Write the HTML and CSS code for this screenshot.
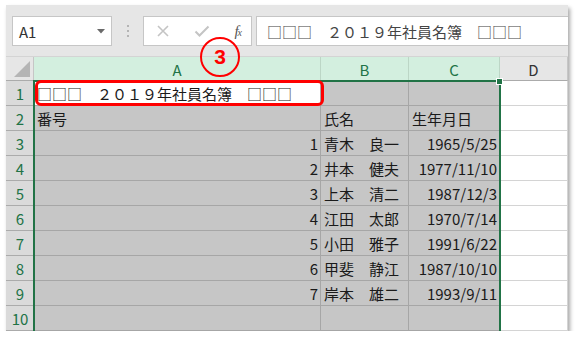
FILE: index.html
```html
<!DOCTYPE html>
<html lang="ja">
<head>
<meta charset="UTF-8" />
<title>社員名簿</title>
<link rel="stylesheet" href="styles.css">
</head>
<body>
  <div class="window">

    <div class="toolbar">
      <div class="namebox">
        <span>A1</span>
        <svg class="drop" width="8" height="5" viewBox="0 0 8 5"><path d="M0 0h8L4 4.5z" fill="#6a6a6a"/></svg>
      </div>
      <div class="grip"><i></i><i></i><i></i></div>
      <div class="fxbox">
        <svg width="14" height="14" viewBox="0 0 14 14"><path d="M2 2l10 10M12 2L2 12" stroke="#c4c4c4" stroke-width="1.6" fill="none"/></svg>
        <svg width="16" height="14" viewBox="0 0 16 14"><path d="M1.5 7.5l4 4L14.5 2.5" stroke="#c4c4c4" stroke-width="2" fill="none"/></svg>
        <span class="fx">f<small>x</small></span>
      </div>
      <div class="formula">□□□　２０１９年社員名簿　□□□</div>
    </div>

    <div class="sheet">
      <div class="corner"><span class="tri"></span></div>
      <div class="colhead sel">A</div>
      <div class="colhead sel">B</div>
      <div class="colhead sel">C</div>
      <div class="colhead">D</div>

      <div class="rowhead">1</div>
      <div class="cell active">□□□　２０１９年社員名簿　□□□</div>
      <div class="cell"></div>
      <div class="cell"></div>
      <div class="cell plain"></div>

      <div class="rowhead">2</div>
      <div class="cell">番号</div>
      <div class="cell">氏名</div>
      <div class="cell">生年月日</div>
      <div class="cell plain"></div>

      <div class="rowhead">3</div>
      <div class="cell num">1</div>
      <div class="cell">青木　良一</div>
      <div class="cell num">1965/5/25</div>
      <div class="cell plain"></div>

      <div class="rowhead">4</div>
      <div class="cell num">2</div>
      <div class="cell">井本　健夫</div>
      <div class="cell num">1977/11/10</div>
      <div class="cell plain"></div>

      <div class="rowhead">5</div>
      <div class="cell num">3</div>
      <div class="cell">上本　清二</div>
      <div class="cell num">1987/12/3</div>
      <div class="cell plain"></div>

      <div class="rowhead">6</div>
      <div class="cell num">4</div>
      <div class="cell">江田　太郎</div>
      <div class="cell num">1970/7/14</div>
      <div class="cell plain"></div>

      <div class="rowhead">7</div>
      <div class="cell num">5</div>
      <div class="cell">小田　雅子</div>
      <div class="cell num">1991/6/22</div>
      <div class="cell plain"></div>

      <div class="rowhead">8</div>
      <div class="cell num">6</div>
      <div class="cell">甲斐　静江</div>
      <div class="cell num">1987/10/10</div>
      <div class="cell plain"></div>

      <div class="rowhead">9</div>
      <div class="cell num">7</div>
      <div class="cell">岸本　雄二</div>
      <div class="cell num">1993/9/11</div>
      <div class="cell plain"></div>

      <div class="rowhead">10</div>
      <div class="cell"></div>
      <div class="cell"></div>
      <div class="cell"></div>
      <div class="cell plain"></div>
    </div>

    <!-- overlays: selection frame, fill handle, callout -->
    <div class="selection"></div>
    <div class="handle"></div>
    <div class="callout"></div>
    <div class="badge">3</div>

  </div>
</body>
</html>
```

FILE: styles.css
```css
/* Base */
*, *::before, *::after {
  box-sizing: border-box;
}
html, body {
  margin: 0;
  background: #fff;
  font-family: "Noto Sans CJK JP", "Noto Sans", sans-serif;
  font-size: 15px;
  color: #1a1a1a;
}
body {
  padding: 5px 0 0 6px;
}

.window {
  position: relative;
  width: 562px;
  height: 326px;
  background: #fff;
  box-shadow: 2px 3px 4px rgba(0, 0, 0, 0.35);
}

/* Formula bar strip */
.toolbar {
  display: flex;
  align-items: center;
  height: 52px;
  padding: 11px 0 10px 6px;
  background: #e6e6e6;
  border-bottom: 1px solid #d4d4d4;
}
.namebox {
  display: flex;
  align-items: center;
  justify-content: space-between;
  width: 100px;
  height: 30px;
  padding: 0 6px 0 6px;
  background: #fff;
  border: 1px solid #c6c6c6;
  color: #333;
  line-height: 1;
}
.grip {
  width: 31px;
  display: flex;
  flex-direction: column;
  align-items: center;
  gap: 3px;
}
.grip i {
  display: block;
  width: 2px;
  height: 2px;
  background: #b4b4b4;
}
.fxbox {
  display: flex;
  align-items: center;
  justify-content: space-between;
  width: 109px;
  height: 30px;
  padding: 0 10px 0 12px;
  background: #fff;
  border: 1px solid #c6c6c6;
}
.fx {
  font-family: "Liberation Serif", serif;
  font-style: italic;
  font-size: 15px;
  color: #555;
  letter-spacing: -1px;
}
.fx small {
  font-size: 10px;
}
.formula {
  flex: 1;
  height: 30px;
  margin-left: 4px;
  padding: 0 0 0 10px;
  display: flex;
  align-items: center;
  background: #fff;
  border: 1px solid #c6c6c6;
  border-right: none;
  color: #444;
  white-space: nowrap;
  overflow: hidden;
}

/* Grid */
.sheet {
  display: grid;
  grid-template-columns: 28px 287px 88px 91px 68px;
  grid-template-rows: 24px repeat(10, 25px);
}
.corner {
  position: relative;
  background: #e6e6e6;
  border-right: 1px solid #c6c6c6;
  border-bottom: 1px solid #ababab;
}
.corner .tri {
  position: absolute;
  right: 3px;
  bottom: 3px;
  width: 0;
  height: 0;
  border-left: 16px solid transparent;
  border-bottom: 16px solid #b5b5b5;
}
.colhead {
  display: flex;
  align-items: center;
  justify-content: center;
  background: #e6e6e6;
  border-right: 1px solid #c6c6c6;
  border-bottom: 1px solid #ababab;
  color: #333;
  padding-top: 1px;
}
.colhead.sel {
  background: #d3efdf;
  color: #217346;
  border-right-color: #bcd6c6;
}
.rowhead {
  display: flex;
  align-items: center;
  justify-content: center;
  background: #dadada;
  border-bottom: 1px solid #ababab;
  color: #217346;
  padding-top: 1px;
}
.cell {
  display: flex;
  align-items: center;
  padding: 1px 3px 0 3px;
  background: #c6c6c6;
  border-right: 1px solid #a6a6a6;
  border-bottom: 1px solid #a6a6a6;
  white-space: nowrap;
  overflow: visible;
}
.cell.num {
  justify-content: flex-end;
  padding-right: 2px;
}
.cell.active {
  background: #fff;
}
.cell.plain {
  background: #fff;
  border-right-color: #d4d4d4;
  border-bottom-color: #d4d4d4;
}

/* Overlays */
.selection {
  position: absolute;
  left: 27px;
  top: 75px;
  width: 468px;
  height: 252px;
  border: 2px solid #217346;
  border-bottom: none;
}
.handle {
  position: absolute;
  left: 490px;
  top: 73px;
  width: 7px;
  height: 7px;
  background: #217346;
  border: 1px solid #fff;
}
.callout {
  position: absolute;
  left: 29px;
  top: 75px;
  width: 289px;
  height: 26px;
  border: 3px solid #ff0000;
  border-radius: 6px;
}
.badge {
  position: absolute;
  left: 194px;
  top: 32px;
  width: 40px;
  height: 40px;
  display: flex;
  align-items: center;
  justify-content: center;
  border: 2.5px solid #ff0000;
  border-radius: 50%;
  color: #ff0000;
  font-family: "Liberation Sans", sans-serif;
  font-weight: 700;
  font-size: 21px;
}
```
